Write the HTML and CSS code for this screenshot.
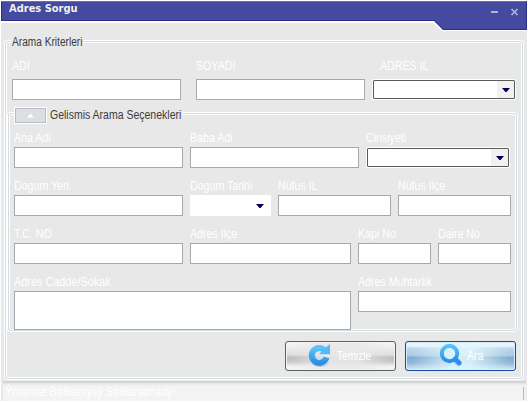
FILE: index.html
```html
<!DOCTYPE html>
<html lang="tr">
<head>
<meta charset="utf-8">
<title>Adres Sorgu</title>
<link rel="stylesheet" href="styles.css">
</head>
<body>
<div class="window">
  <header class="titlebar">
    <svg class="title-shape" width="527" height="32" viewBox="0 0 527 32">
      <path fill="#fff" d="M0 0H527V31H442L433 23H0Z"/>
      <path fill="#2b3087" d="M1 1H527V30H443L434 21H1Z"/>
      <path fill="#444a9f" d="M2 2H526V29H443.5L434.5 20H2Z"/>
      <path fill="#686eb4" d="M1 1H526V2H1Z"/>
    </svg>
    <h1>Adres Sorgu</h1>
    <svg class="controls" width="28" height="8" viewBox="0 0 28 8">
      <path fill="#abb3d6" d="M0 3H7V5H0Z"/>
      <path stroke="#abb3d6" stroke-width="1.7" d="M20.5 1L26.5 7M26.5 1L20.5 7"/>
    </svg>
  </header>

  <main class="criteria">
    <div class="legend"><span class="text">Arama Kriterleri</span></div>
    <div class="row main-row">
      <div class="field"><label class="text">ADI</label><div class="input"></div></div>
      <div class="field"><label class="text">SOYADI</label><div class="input"></div></div>
      <div class="field city"><label class="text">ADRES IL</label><div class="select"><i></i></div></div>
    </div>

    <section class="advanced">
      <div class="legend toggle-line">
        <button class="toggle"><i></i></button><span class="text">Gelismis Arama Seçenekleri</span>
      </div>
      <div class="row parents">
        <div class="field"><label class="text">Ana Adi</label><div class="input"></div></div>
        <div class="field"><label class="text">Baba Adi</label><div class="input"></div></div>
        <div class="field"><label class="text">Cinsiyeti</label><div class="select"><i></i></div></div>
      </div>
      <div class="row birth">
        <div class="field"><label class="text">Dogum Yeri</label><div class="input"></div></div>
        <div class="field"><label class="text">Dogum Tarihi</label><div class="date"><i></i></div></div>
        <div class="field"><label class="text">Nüfus IL</label><div class="input"></div></div>
        <div class="field"><label class="text">Nüfus Ilçe</label><div class="input"></div></div>
      </div>
      <div class="row numbers">
        <div class="field"><label class="text">T.C. NO</label><div class="input"></div></div>
        <div class="field"><label class="text">Adres Ilçe</label><div class="input"></div></div>
        <div class="field"><label class="text">Kapi No</label><div class="input"></div></div>
        <div class="field"><label class="text">Daire No</label><div class="input"></div></div>
      </div>
      <div class="row street">
        <div class="field"><label class="text wide">Adres Cadde/Sokak</label><div class="input tall"></div></div>
        <div class="field"><label class="text">Adres Muhtarlik</label><div class="input"></div></div>
      </div>
    </section>

    <div class="actions">
      <button class="action clear">
        <svg width="24" height="24" viewBox="0 0 24 24">
          <defs><linearGradient id="blue" x2="0" y2="1"><stop stop-color="#5bc4fb"/><stop offset="1" stop-color="#2b8fe8"/></linearGradient></defs>
          <path fill="#777" opacity=".3" d="M3 19Q12 27 21 19L19 22Q12 26 5 22Z"/>
          <path fill="none" stroke="url(#blue)" stroke-width="6" d="M17 7.5A7.5 7.5 0 1 0 18.5 14.5"/>
          <path fill="#54b9f7" d="M22 1V11.5H11.5V10.5L18.5 4Z"/>
          <path fill="#d9f1ff" d="M11 11.5H22V13H11Z"/>
        </svg>
        <span class="text">Temizle</span>
      </button>
      <button class="action search">
        <svg width="24" height="24" viewBox="0 0 24 24">
          <path fill="none" stroke="#657f99" stroke-opacity=".35" stroke-width="5" d="M16 17L21 22"/>
          <circle cx="10.5" cy="10.5" r="7.7" fill="#d9f1fc" stroke="url(#blue)" stroke-width="4"/>
          <path stroke="#2b90ec" stroke-width="4.6" stroke-linecap="round" d="M16.5 16.3L20.3 20"/>
        </svg>
        <span class="text">Ara</span>
      </button>
    </div>
  </main>

  <footer class="status"><span class="text">Ýnternet Baðlantýsý Saðlanamadý!</span></footer>
</div>
</body>
</html>
```
FILE: styles.css
```css
* { box-sizing: border-box; }

body {
  margin: 0;
  width: 528px;
  height: 402px;
  overflow: hidden;
  background: #fff;
  font: 12px/14px "Liberation Sans", sans-serif;
  color: #fff;
}

.window {
  width: 527px;
  height: 401px;
  display: flex;
  flex-direction: column;
  border-left: 1px solid #fff;
  background: #e8e8e8;
}

.titlebar {
  position: relative;
  height: 41px;
  display: flex;
  justify-content: space-between;
  align-items: flex-start;
  padding: 2px 8px 0 8px;
}
.title-shape { position: absolute; left: -1px; top: 0; }
.titlebar h1 {
  position: relative;
  margin: 0;
  font: bold 11px/14px "DejaVu Sans", sans-serif;
  color: #f0f0ef;
  transform: scaleX(.9);
  transform-origin: left;
}
.controls { position: relative; margin-top: 6px; }

.text {
  display: inline-block;
  white-space: nowrap;
  transform: scaleX(.885);
  transform-origin: left;
}
.text.wide { transform: scaleX(.905); }

.criteria {
  width: 518px;
  height: 338px;
  margin-left: 4px;
  border: 1px solid #d1dde5;
  border-radius: 3px;
  box-shadow: 0 0 0 1px #fff, inset 0 0 0 1px #fff;
}

.legend {
  display: flex;
  align-items: center;
  width: 72px;
  height: 14px;
  margin: -7px 0 0 5px;
  padding-left: 1px;
  background: #e8e8e8;
  color: #3c3c3c;
}
.legend .text { transform: scaleX(.845); }

.row { display: grid; column-gap: 7px; }
.field { min-width: 0; height: 48px; }
.field label { display: block; height: 16px; line-height: 14px; }

.input { height: 21px; background: #fff; border: 1px solid #a3a9af; }
.input.tall { height: 39px; }

.select {
  height: 21px;
  display: flex;
  justify-content: flex-end;
  border: 1px solid #fff;
  outline: 1px solid #5a5a5a;
  outline-offset: -2px;
  border-radius: 2px;
  padding: 1px;
  background: linear-gradient(90deg, #fff calc(100% - 18px), #f2f1f1 0);
}
.select i, .date i {
  width: 8px;
  height: 4px;
  background: #000060;
  clip-path: polygon(0 0, 100% 0, 57% 100%, 43% 100%);
}
.select i { margin: 7px 4px 0 0; }

.date {
  height: 21px;
  display: flex;
  justify-content: flex-end;
  padding: 9px 7px 0 0;
  background: #fff;
}

.main-row {
  grid-template-columns: 169px 169px 144px;
  column-gap: 0;
  padding: 10px 0 0 6px;
}
.main-row .field { height: 54px; }
.main-row .field:nth-child(2) { margin: 0 -15px 0 15px; }
.main-row .city { margin: 0 -22px 0 22px; }
.main-row label { height: 20px; }
.main-row .city label { padding-left: 9px; }

.advanced {
  width: 509px;
  height: 218px;
  margin: 0 0 0 2px;
  border: 1px solid #d1dde5;
  border-radius: 3px;
  box-shadow: 0 0 0 1px #fff, inset 0 0 0 1px #fff;
}
.toggle-line {
  width: 168px;
  height: 18px;
  margin: -8px 0 0 5px;
  padding: 0;
  gap: 3px;
}
.toggle-line .text { transform: scaleX(.875); }
.toggle {
  display: flex;
  align-items: center;
  justify-content: center;
  flex: none;
  width: 33px;
  height: 17px;
  margin-top: 1px;
  padding: 0;
  background: #dcdee3;
  border: 1px solid #fff;
  outline: 1px solid #b6bcc4;
  outline-offset: -2px;
}
.toggle i {
  width: 7px;
  height: 4px;
  background: #fff;
  clip-path: polygon(50% 0, 100% 100%, 0 100%);
}

.parents, .birth, .numbers, .street { padding-left: 5px; }
.parents { padding-top: 7px; grid-template-columns: 169px 169px 144px; }
.birth { grid-template-columns: 169px 81px 113px 113px; }
.numbers { grid-template-columns: 169px 161px 73px 73px; }
.street { grid-template-columns: 337px 153px; }

.actions {
  display: flex;
  justify-content: flex-end;
  gap: 9px;
  padding: 10px 6px 0;
}
.action {
  display: flex;
  align-items: center;
  width: 111px;
  height: 30px;
  padding: 0 0 0 22px;
  border: 1px solid #606060;
  border-radius: 3px;
  font: inherit;
  color: #fff;
}
.action svg { flex: none; margin-top: -2px; }
.action .text { margin-left: 5px; }
.clear {
  background:
    linear-gradient(90deg, transparent 5%, #e8e8e8e0 38% 65%, transparent 95%),
    linear-gradient(#f7f7f7 0, #dfdfdf 45%, #c0c0c0 55%, #c8c8c8 70%, #f3f3f3 88%);
  box-shadow: inset 0 0 0 1px #f3f3f3;
}
.clear .text { transform: scaleX(.84); }
.search {
  padding-left: 33px;
  border-color: #174c9c;
  background:
    linear-gradient(90deg, transparent 5%, #e2f7ffd8 45% 60%, transparent 95%),
    linear-gradient(#eaf3fa 0 15%, #bdd6e9 22%, #a9c9e1 50%, #7eabd0 54%, #93b9d8 75%, #d4eafa);
  box-shadow: inset 0 0 0 1px #d8ecfa;
}
.search .text { margin-left: 4px; }

.status {
  height: 20px;
  margin: 2px 1px 0 2px;
  padding: 2px 0 0 2px;
  border-top: 2px solid #d5d5d5;
  background:
    linear-gradient(#b8b8b8, #b8b8b8) 520px 4px / 1px 13px no-repeat,
    linear-gradient(#e4e4e4, #f3f3f3 3px);
}
.status .text { transform: scaleX(.91); }
```
